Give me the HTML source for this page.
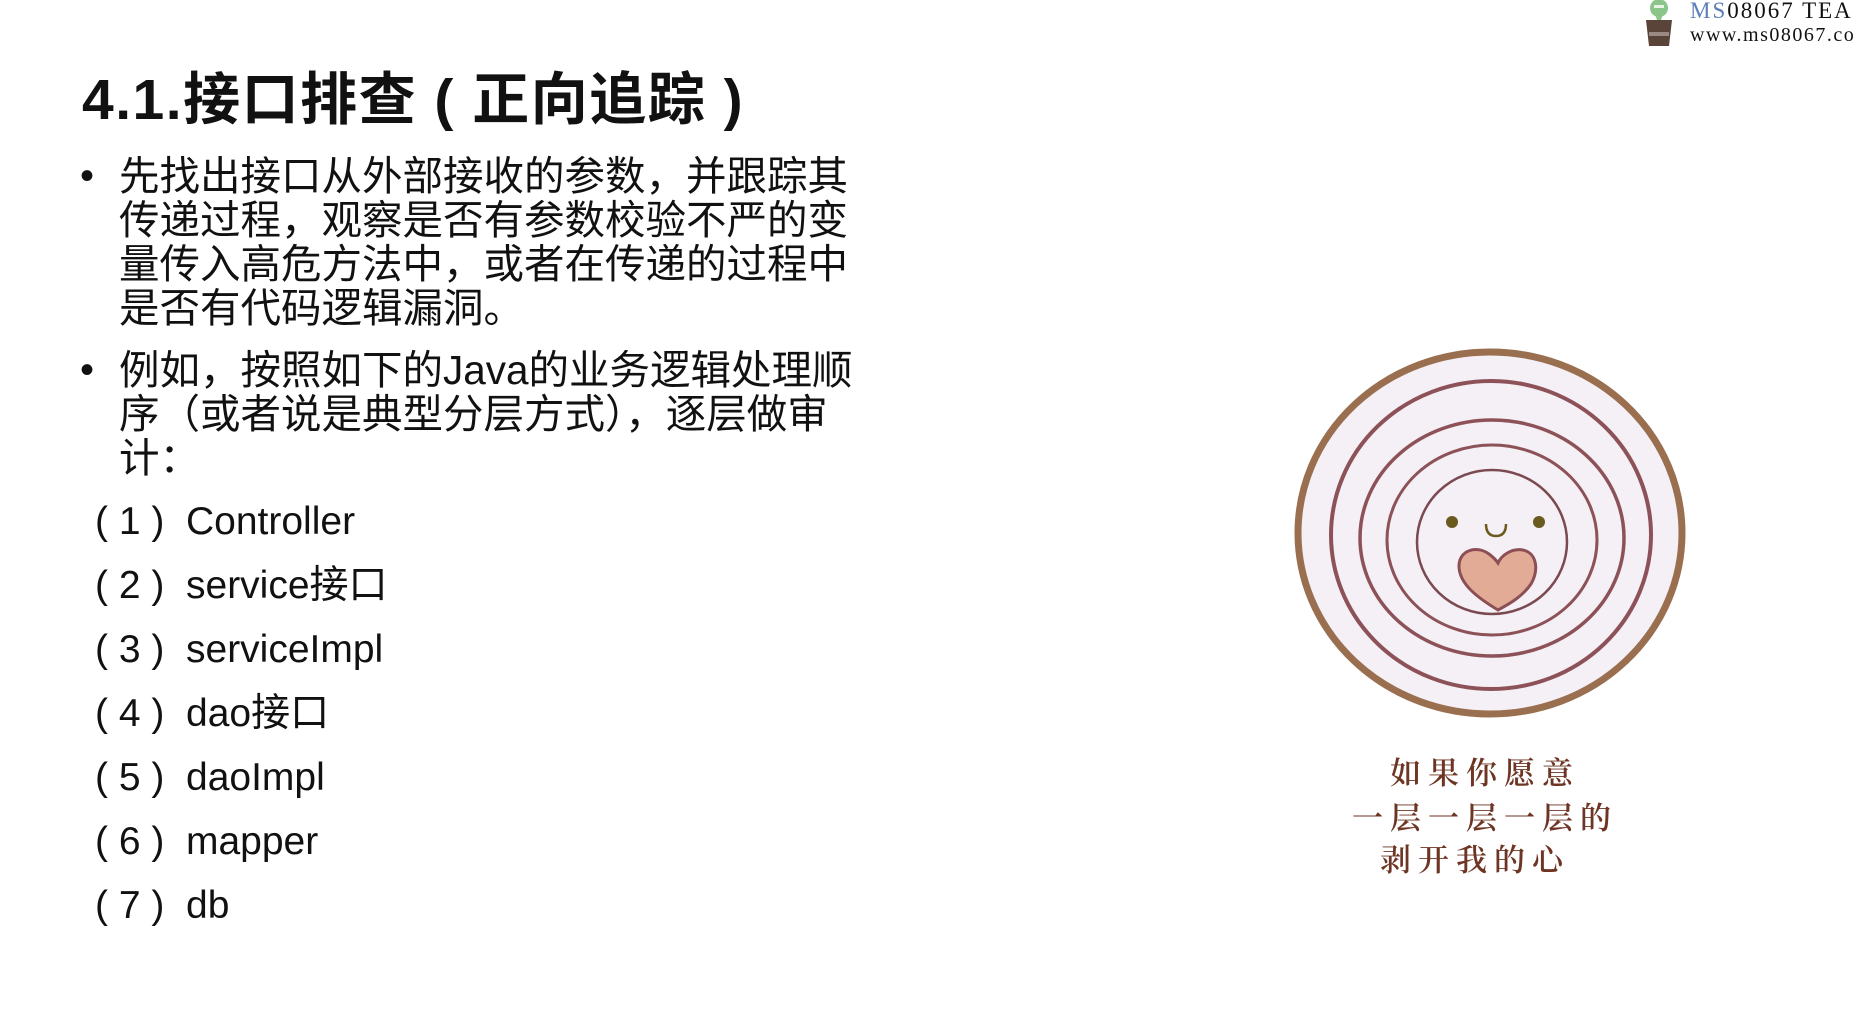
<!DOCTYPE html>
<html><head><meta charset="utf-8"><style>
body{margin:0;width:1862px;height:1024px;background:#fff;position:relative;overflow:hidden;font-family:"Liberation Sans","Noto Sans CJK SC",sans-serif;color:#111}
.t{position:absolute;white-space:nowrap}
h1{position:absolute;left:82px;top:54px;margin:0;font-size:57px;font-weight:bold;letter-spacing:1.5px;white-space:pre}
.p{position:absolute;left:119px;font-size:40.5px;line-height:44px;white-space:nowrap}
.b{position:absolute;left:80px;font-size:40px;line-height:44px}
.li{position:absolute;font-size:39px;line-height:44px;white-space:nowrap}
.n{position:absolute;left:95px;font-size:39px;line-height:44px;white-space:pre}
.cap{position:absolute;font-family:"Noto Serif CJK SC",serif;font-size:31px;color:#6e3524;letter-spacing:7px;white-space:nowrap;font-weight:600}
</style></head><body>
<h1>4.1.接口排查 ( 正向追踪 )</h1>
<div class="b" style="top:154px">•</div>
<div class="p" style="top:154px">先找出接口从外部接收的参数，并跟踪其<br>传递过程，观察是否有参数校验不严的变<br>量传入高危方法中，或者在传递的过程中<br>是否有代码逻辑漏洞。</div>
<div class="b" style="top:348px">•</div>
<div class="p" style="top:348px">例如，按照如下的Java的业务逻辑处理顺<br>序（或者说是典型分层方式），逐层做审<br>计：</div>
<div class="n" style="top:500px">( 1 )</div><div class="li" style="left:186px;top:500px">Controller</div>
<div class="n" style="top:564px">( 2 )</div><div class="li" style="left:186px;top:564px">service接口</div>
<div class="n" style="top:628px">( 3 )</div><div class="li" style="left:186px;top:628px">serviceImpl</div>
<div class="n" style="top:692px">( 4 )</div><div class="li" style="left:186px;top:692px">dao接口</div>
<div class="n" style="top:756px">( 5 )</div><div class="li" style="left:186px;top:756px">daoImpl</div>
<div class="n" style="top:820px">( 6 )</div><div class="li" style="left:186px;top:820px">mapper</div>
<div class="n" style="top:884px">( 7 )</div><div class="li" style="left:186px;top:884px">db</div>

<svg style="position:absolute;left:0;top:0" width="1862" height="1024">
<ellipse cx="1490" cy="533" rx="192" ry="181" fill="#f5eff6" stroke="#9a6f4f" stroke-width="7"/>
<ellipse cx="1491" cy="535" rx="160" ry="154" fill="none" stroke="#8c5258" stroke-width="4"/>
<ellipse cx="1492" cy="538" rx="132" ry="118" fill="none" stroke="#8c5258" stroke-width="3.5"/>
<ellipse cx="1492" cy="540" rx="105" ry="95" fill="none" stroke="#8c5258" stroke-width="3"/>
<ellipse cx="1492" cy="542" rx="75" ry="72" fill="none" stroke="#7a4a50" stroke-width="2.5"/>
<circle cx="1452" cy="522" r="6" fill="#6b5a1e"/>
<circle cx="1539" cy="522" r="6" fill="#6b5a1e"/>
<path d="M1486 524 Q1486 536 1496 536 Q1506 536 1506 524" fill="none" stroke="#6b5a1e" stroke-width="2.5"/>
<path d="M1498 610 C1478 598 1459 584 1459 566 C1459 550 1477 545 1489 554 C1493 557 1496 560 1498 563 C1501 556 1511 548 1523 550 C1537 553 1539 570 1531 584 C1522 597 1509 604 1498 610Z" fill="#e1ab96" stroke="#8c4f55" stroke-width="3"/>
</svg>
<div class="cap" style="left:1390px;top:748px">如果你愿意</div>
<div class="cap" style="left:1352px;top:793px">一层一层一层的</div>
<div class="cap" style="left:1380px;top:835px">剥开我的心</div>

<svg style="position:absolute;left:1640px;top:0" width="40" height="50">
<ellipse cx="19" cy="8" rx="9" ry="9" fill="#8cc58a"/>
<rect x="14" y="5" width="10" height="3" fill="#e8f3e6"/>
<path d="M15 14 L23 14 L21 20 L17 20Z" fill="#8cc58a"/>
<path d="M6 20 L32 20 L29 46 L9 46Z" fill="#5a4338"/>
<rect x="9" y="32" width="20" height="4" fill="#9a8a85"/>
</svg>
<div class="t" style="left:1690px;top:-2px;font-family:'Liberation Serif',serif;font-size:23px;letter-spacing:2px"><span style="color:#5b7fb6">MS</span>08067 TEA</div>
<div class="t" style="left:1690px;top:24px;font-family:'Liberation Serif',serif;font-size:20px;letter-spacing:1.5px">www.ms08067.co</div>
</body></html>
